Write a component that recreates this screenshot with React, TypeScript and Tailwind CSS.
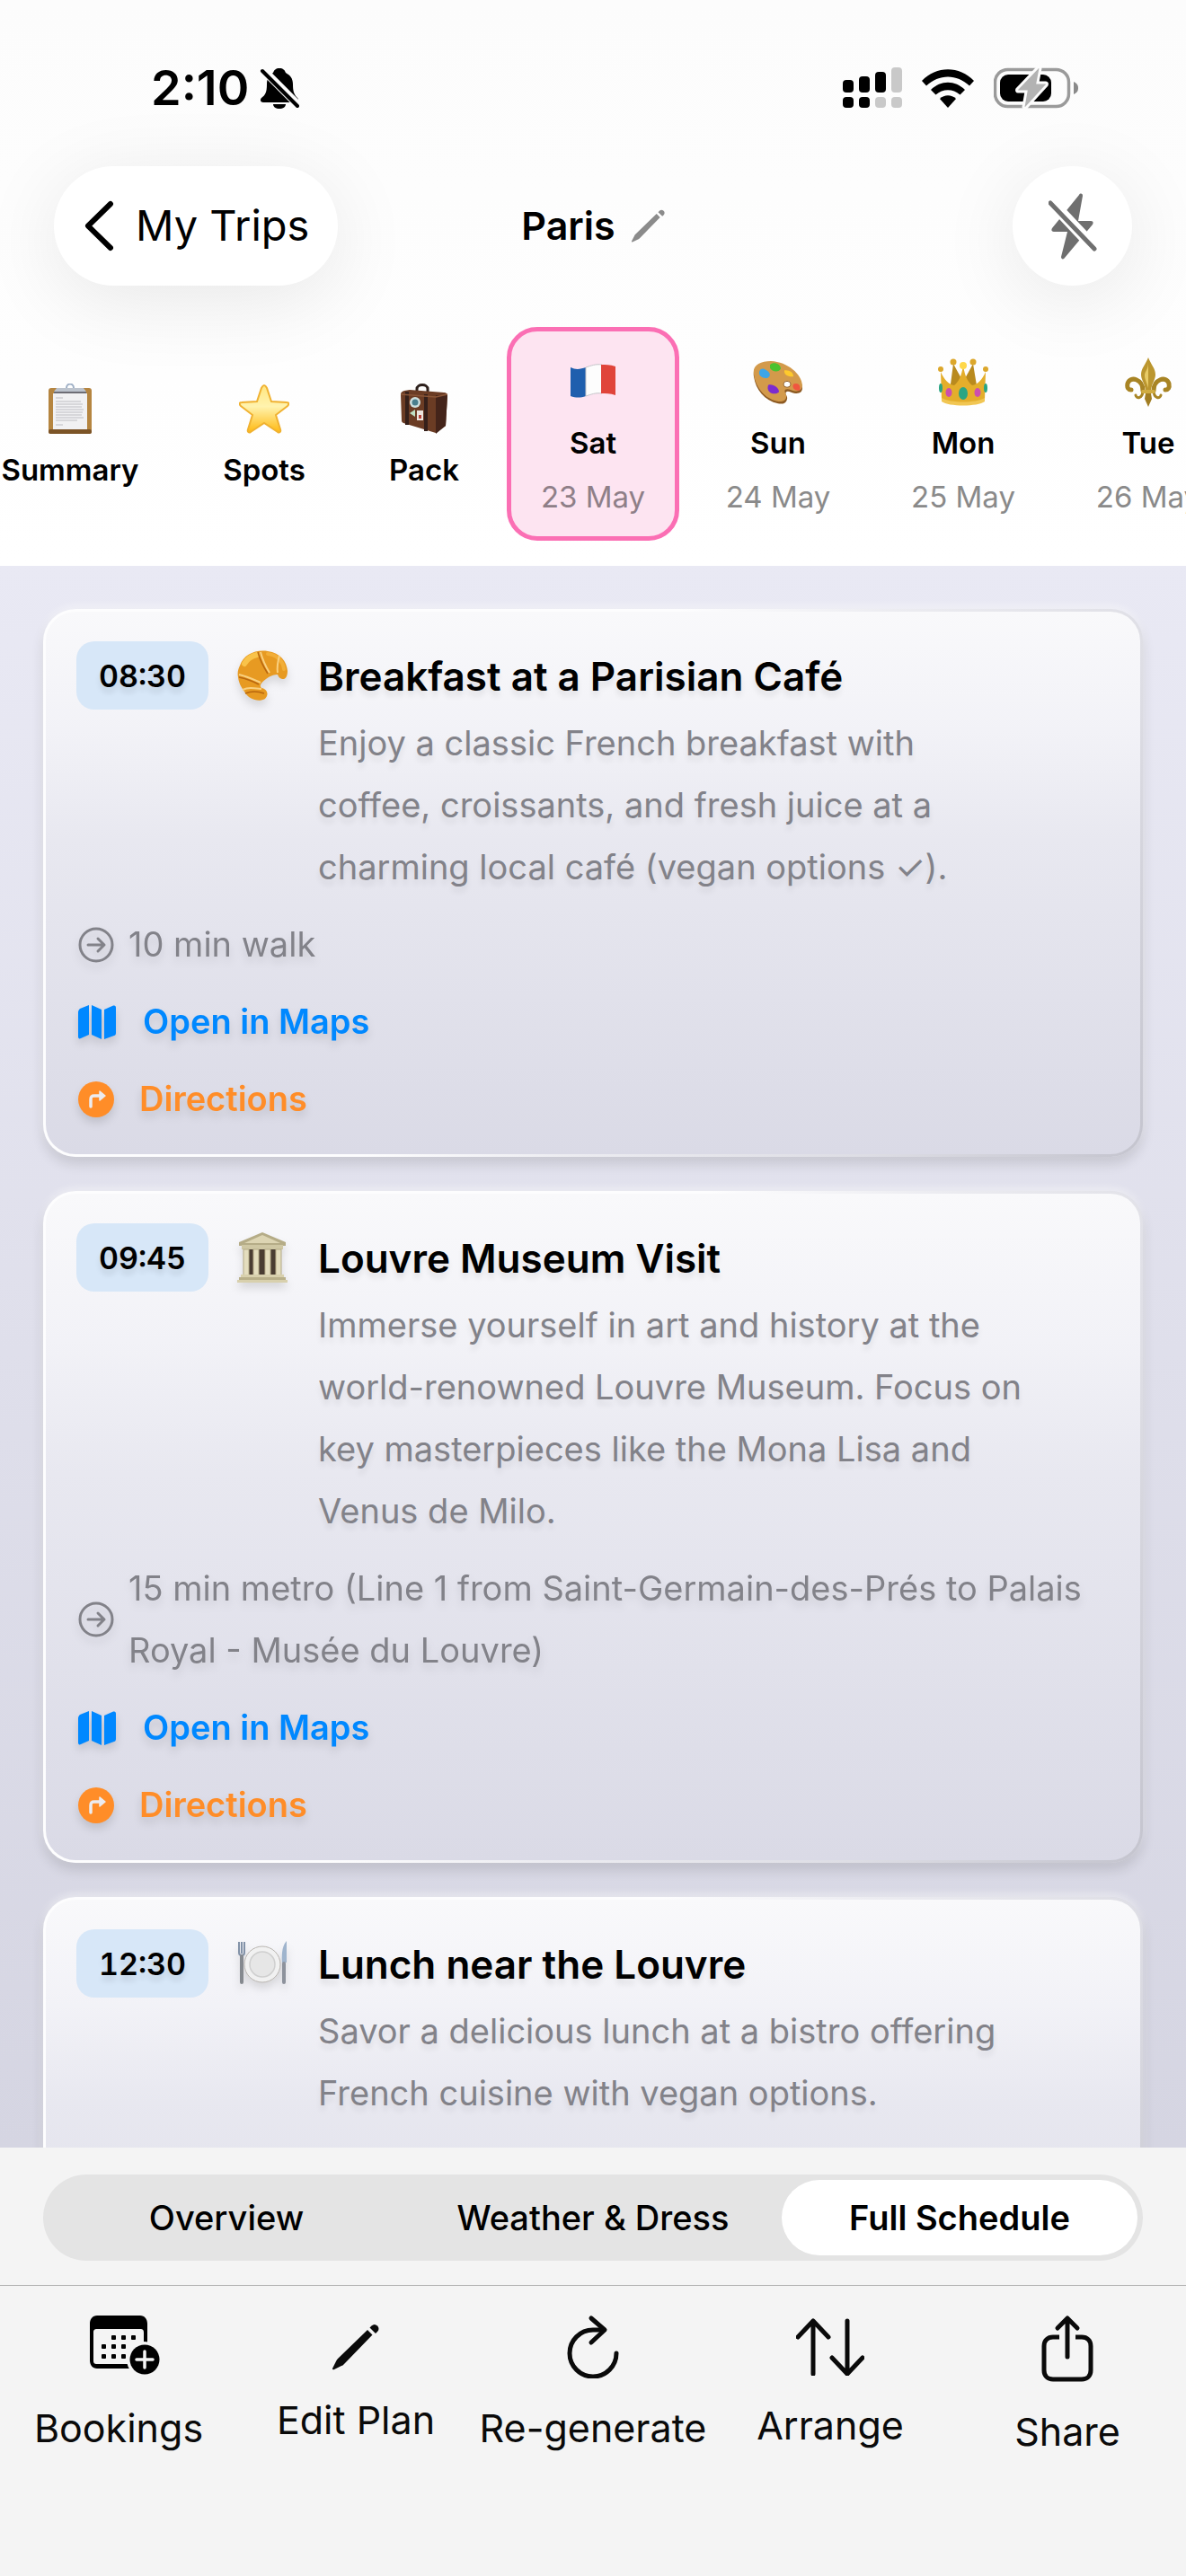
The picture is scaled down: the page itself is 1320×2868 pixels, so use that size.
import type { ReactNode } from 'react';
import clsx from 'clsx';

/* ---------- Status bar icons ---------- */

function BellOff() {
  return (
    <svg width="44" height="46" viewBox="0 0 44 46" fill="none">
      <path d="M22 1c-4 0-6 2-7 5-5 3-7 7-7 13 0 9-2 12-6 15-2 2-1 5 2 5h36c3 0 4-3 2-5-4-4-5-8-5-15 0-7-3-10-8-13-1-3-3-5-7-5Z" fill="#000" />
      <path d="M15 41h14c0 3-3 5-7 5s-7-2-7-5Z" fill="#000" />
      <path d="M2 1 43 42" stroke="#fcfcfc" strokeWidth="9" />
      <path d="M3 4 42 43" stroke="#000" strokeWidth="4" strokeLinecap="round" />
    </svg>
  );
}

function Signal() {
  return (
    <svg width="66" height="46" viewBox="0 0 66 46">
      <rect x="0" y="14" width="12" height="14" rx="4" />
      <rect x="18" y="10" width="12" height="18" rx="4" />
      <rect x="36" y="5" width="12" height="23" rx="4" />
      <rect x="54" y="0" width="12" height="28" rx="4" fill="#c9c9c9" />
      <rect x="0" y="33" width="12" height="12" rx="4" />
      <rect x="18" y="33" width="12" height="12" rx="4" />
      <rect x="36" y="33" width="12" height="12" rx="4" fill="#c9c9c9" />
      <rect x="54" y="33" width="12" height="12" rx="4" fill="#c9c9c9" />
    </svg>
  );
}

function Wifi() {
  return (
    <svg width="58" height="43" viewBox="0 0 58 43">
      <path d="M0 13C16-4 42-4 58 13l-5 5.500C39 5 19 5 5 18.500Z" />
      <path d="M10 23c11-11 27-11 38 0l-5.500 5.500c-8-7-19-7-27 0Z" />
      <path d="M20 33c5-5 13-5 18 0l-9 10Z" />
    </svg>
  );
}

function Battery() {
  return (
    <svg width="94" height="46" viewBox="0 0 94 46">
      <rect x="1.500" y="2.500" width="82" height="41" rx="14" fill="none" stroke="#9a9a9a" strokeWidth="3.500" />
      <rect x="7" y="8" width="57" height="30" rx="9" />
      <path d="M89 16c4 2 5 4 5 7s-1 5-5 7Z" fill="#8a8a8a" />
      <path
        d="M48 1 26 24c-1 2 0 3 1 3h9l-3 17c1 2 3 2 4 0l22-24c1-2 0-3-1-3h-9l3-16c-1-2-3-2-4 0Z"
        fill="#b3b3b3"
        stroke="#fcfcfc"
        strokeWidth="3"
      />
    </svg>
  );
}

/* ---------- Action icons ---------- */

function Pencil({ size, className }: { size: number; className?: string }) {
  return (
    <svg width={size} height={size} viewBox="0 0 52 52" fill="currentColor" className={className}>
      <path d="M0 50 4 42c.5-1 1-2 2-3L39 7l5.500 5.500L13 45c-1 1-2 2-3 2l-8 4c-1.500.5-2.500 0-2-1Z" />
      <path d="m41.500 4.500 2-2c2-2 4.500-2 6.500 0s2 4.500 0 6.500l-2 2Z" />
    </svg>
  );
}

function BoltOff() {
  return (
    <svg width="54" height="74" viewBox="0 0 54 74" fill="none">
      <path d="M34 2c1-2 4-2 4 1l-5 28h14c3 0 3 2 2 4L18 72c-1 2-4 2-4-1l7-28H6c-3 0-3-2-2-4Z" fill="#6f6f6f" />
      <path d="M2 9 52 62" stroke="#fff" strokeWidth="13" />
      <path d="M2 11 51 62" stroke="#6f6f6f" strokeWidth="5" strokeLinecap="round" />
    </svg>
  );
}

// The plus badge hangs outside the 64px box so the calendar itself stays centred.
function CalendarPlus() {
  return (
    <svg width="64" height="74" viewBox="0 0 64 74" className="overflow-visible">
      <path
        fillRule="evenodd"
        d="M8 4h48c5 0 8 4 8 9v41c0 5-3 9-8 9H8c-5 0-8-4-8-9V13c0-5 3-9 8-9Zm0 15c-3 0-4 1-4 4v31c0 3 1 4 4 4h48c3 0 4-1 4-4V23c0-3-1-4-4-4Z"
      />
      <g>
        <rect x="24" y="26" width="5" height="5" rx="1" />
        <rect x="35" y="26" width="5" height="5" rx="1" />
        <rect x="46" y="26" width="5" height="5" rx="1" />
        <rect x="13" y="36" width="5" height="5" rx="1" />
        <rect x="24" y="36" width="5" height="5" rx="1" />
        <rect x="35" y="36" width="5" height="5" rx="1" />
        <rect x="13" y="47" width="5" height="5" rx="1" />
        <rect x="24" y="47" width="5" height="5" rx="1" />
        <rect x="35" y="47" width="5" height="5" rx="1" />
      </g>
      <circle cx="61" cy="53" r="20" fill="#f4f4f4" />
      <circle cx="61" cy="53" r="16.500" />
      <path d="M61 44v18M52 53h18" stroke="#f4f4f4" strokeWidth="3.500" strokeLinecap="round" />
    </svg>
  );
}

function EditIcon() {
  return (
    <span className="flex h-[65px] items-end">
      <Pencil size={52} />
    </span>
  );
}

function Regenerate() {
  return (
    <svg width="58" height="74" viewBox="0 0 58 74" fill="none" stroke="#0a0a0a" strokeWidth="5" strokeLinecap="round" strokeLinejoin="round">
      <path d="M55 46A26 26 0 1 1 29 20h11" />
      <path d="M27 7 42 20 27 34" />
    </svg>
  );
}

function Arrange() {
  return (
    <svg width="76" height="71" viewBox="0 0 76 71" fill="none" stroke="#0a0a0a" strokeWidth="5" strokeLinecap="round" strokeLinejoin="round">
      <path d="M19 69V10M2 28 19 10l17 18M57 10v59M40 51l17 18 17-18" />
    </svg>
  );
}

function Share() {
  return (
    <svg width="58" height="78" viewBox="0 0 58 78" fill="none" stroke="#0a0a0a" strokeWidth="5" strokeLinecap="round" strokeLinejoin="round">
      <path d="M29 50V7M18 18 29 7l11 11" />
      <path d="M20 28h-7c-6 0-10 4-10 10v27c0 6 4 10 10 10h32c6 0 10-4 10-10V38c0-6-4-10-10-10h-7" strokeLinecap="butt" />
    </svg>
  );
}

/* ---------- Card row icons ---------- */

function ArrowCircle() {
  return (
    <svg width="40" height="40" viewBox="0 0 40 40" fill="none" stroke="#828289" strokeWidth="3" strokeLinecap="round" strokeLinejoin="round" className="shrink-0">
      <circle cx="20" cy="20" r="18" />
      <path d="M11 20h18M22 13l7 7-7 7" />
    </svg>
  );
}

function MapIcon() {
  return (
    <svg width="42" height="40" viewBox="0 0 42 40" fill="#0088ff" className="shrink-0">
      <path d="M0 9c0-2 1-3 2-4l10-4v33L3 38c-2 1-3 0-3-2Z" />
      <path d="m15 1 11 5v33l-11-5Z" />
      <path d="M29 6 38 2c3-1 4 0 4 2v28c0 2-1 3-2 3l-11 4Z" />
    </svg>
  );
}

function TurnCircle() {
  return (
    <svg width="40" height="40" viewBox="0 0 40 40" fill="none" className="shrink-0">
      <circle cx="20" cy="20" r="20" fill="#ff8d28" />
      <path d="M14 28v-8c0-3 1-4 4-4h8" stroke="#ececf0" strokeWidth="3.500" strokeLinecap="round" />
      <path d="m24 11 6 5-6 5Z" fill="#ececf0" stroke="#ececf0" strokeWidth="1.500" strokeLinejoin="round" />
    </svg>
  );
}

/* ---------- Pictograms ---------- */

function Clipboard() {
  return (
    <svg width="56" height="56" viewBox="0 0 56 56">
      <rect x="4" y="5" width="48" height="51" rx="3" fill="#b58540" />
      <rect x="4" y="51" width="48" height="5" rx="2" fill="#7c5427" />
      <path d="M9 11h38v40H9Z" fill="#f1f1f3" />
      <path d="M10 9h36l-3-4H13Z" fill="#bcc3cd" />
      <rect x="10" y="9" width="36" height="2" fill="#6d6d75" />
      <path d="M24 5c0-6 8-6 8 0" fill="none" stroke="#9fb0c6" strokeWidth="2" />
      <path d="M12 16h8M12 20h28M12 23h30M12 26h29M12 29h31M12 32h30M12 35h29M12 38h31M12 41h24M12 46h8" stroke="#bdbdc2" strokeWidth="1" />
    </svg>
  );
}

function Star() {
  return (
    <svg width="56" height="56" viewBox="0 0 56 56">
      <defs>
        <linearGradient id="star" x1="0" y1="0" x2="0" y2="1">
          <stop offset="0" stopColor="#ffe680" />
          <stop offset=".45" stopColor="#fff3ae" />
          <stop offset="1" stopColor="#ffb911" />
        </linearGradient>
      </defs>
      <path
        d="M28 2c1 0 2 1 3 3l5 15 17 1c3 0 3 2 1 4L41 35l5 16c1 3-1 4-3 3L28 44 13 54c-2 1-4 0-3-3l5-16L2 25c-2-2-2-4 1-4l17-1 5-15c1-2 2-3 3-3Z"
        fill="url(#star)"
        stroke="#f0b232"
        strokeWidth="2"
      />
    </svg>
  );
}

function Suitcase() {
  return (
    <svg width="56" height="56" viewBox="0 0 56 56">
      <path d="M20 11V6c0-6 12-6 12 0v6" fill="none" stroke="#2c1f1b" strokeWidth="3" />
      <path d="M2 12c0-2 1-3 4-4l6-1 38 3c3 0 4 2 4 4l-2 33-11 8L5 44c-2-1-2-2-2-3Z" fill="#6b3c24" />
      <path d="m41 13 13 0-2 34-11 9Z" fill="#44241a" />
      <path d="M9 9v37M30 12v41" stroke="#35201a" strokeWidth="4" />
      <path d="M2 12 41 15l13-3" fill="none" stroke="#8a5638" strokeWidth="1.500" />
      <circle cx="18" cy="21" r="6" fill="#cfe0de" />
      <circle cx="18" cy="21" r="3.500" fill="#4a7f8d" />
      <path d="m12 33 6-4v8Z" fill="#bfe0c4" />
      <rect x="20" y="30" width="7" height="11" fill="#ece6df" />
      <path d="M22 35h3v4h-3Z" fill="#b6423a" />
    </svg>
  );
}

function Flag() {
  return (
    <svg width="56" height="56" viewBox="0 0 56 56">
      <path d="M3 12c6 3 11 2 17 0v32c-6 2-11 2-17 0Z" fill="#1f5fae" />
      <path d="M20 12c6-2 11-4 18-3v32c-7-1-12 1-18 3Z" fill="#fdfdfd" stroke="#c5c5c9" strokeWidth="1" />
      <path d="M37 9c5 0 10 0 16 2v32c-6-2-11-2-16-2Z" fill="#e0443a" />
    </svg>
  );
}

function Palette() {
  return (
    <svg width="56" height="56" viewBox="0 0 56 56">
      <g transform="translate(0 5) scale(1 .86)">
        <path d="M1 20C-1 8 8 1 20 2c19 1 34 18 35 33 0 6-4 7-8 7-4-1-8-4-10-2-2 3 2 5 1 9-1 6-5 7-10 6C13 51 3 37 1 20Z" fill="#8d5a22" />
        <path d="M1 17C-1 6 8 0 20 0c19 1 34 17 35 31 0 6-4 8-8 8-4-1-8-4-11-2-2 3 2 6 1 10-1 5-5 6-10 5C13 49 3 34 1 17Z" fill="#d39a4b" />
        <circle cx="38" cy="30" r="4" fill="#fff" stroke="#8d5a22" />
        <path d="M7 14c1-5 5-5 8-2 5 3 5 8 1 10-5 1-10-3-9-8Z" fill="#3da5e8" />
        <path d="M19 5c4-5 12-1 12 5-2 5-10 4-12-1Z" fill="#4cc22e" />
        <path d="M35 12c6-1 10 3 10 8-5 1-11-2-10-8Z" fill="#ffca2c" />
        <path d="M45 30c5-3 9 2 7 8-5 1-9-3-7-8Z" fill="#f0563f" />
        <path d="M17 31c5-2 12 3 12 9-5 5-15 1-12-9Z" fill="#7c2bd0" />
      </g>
    </svg>
  );
}

function Crown() {
  return (
    <svg width="56" height="56" viewBox="0 0 56 56">
      <path d="m13 38 4-30 11 20L39 8l5 30Z" fill="#b98a1e" />
      <path d="M3 17c4 9 9 14 15 15 5-4 8-10 10-22 2 12 5 18 10 22 6-1 11-6 15-15l-1 31c-8 7-40 7-48 0Z" fill="#e4ae2b" />
      <path d="M4 46c10 6 38 6 48 0v4c-8 6-40 6-48 0Z" fill="#f1c653" />
      <g fill="#dca72b">
        <circle cx="3" cy="14" r="3" />
        <circle cx="17" cy="6" r="3.500" />
        <circle cx="28" cy="10" r="4" fill="#ffd84a" />
        <circle cx="39" cy="6" r="3.500" />
        <circle cx="53" cy="14" r="3" />
      </g>
      <ellipse cx="28" cy="41" rx="5" ry="7" fill="#2aa583" />
      <ellipse cx="12" cy="40" rx="3.500" ry="5" fill="#cc4fae" />
      <ellipse cx="44" cy="40" rx="3.500" ry="5" fill="#cc4fae" />
      <ellipse cx="3" cy="35" rx="2" ry="5" fill="#2aa583" />
      <ellipse cx="53" cy="35" rx="2" ry="5" fill="#2aa583" />
    </svg>
  );
}

function FleurDeLis() {
  return (
    <svg width="56" height="56" viewBox="0 0 56 56">
      <g fill="none" stroke="#a88424" strokeWidth="5" strokeLinecap="round">
        <path d="M22 38c0-13-14-17-17-8-1 5 1 7 4 7" />
        <path d="M34 38c0-13 14-17 17-8 1 5-1 7-4 7" />
        <path d="M22 38c0 8-7 10-8 5M34 38c0 8 7 10 8 5" strokeWidth="3" />
      </g>
      <path d="M28 1c3 8 8 12 8 19 0 6-4 9-5 18h-6c-1-9-5-12-5-18 0-7 5-11 8-19Z" fill="#bb962f" />
      <path d="M28 6c0 9-4 10-4 15 0 5 3 9 4 14Z" fill="#e8cb66" />
      <rect x="20" y="37" width="16" height="4" rx="2" fill="#d0ac42" />
      <path d="M25 41h6l1 6-4 9-4-9Z" fill="#a17d22" />
    </svg>
  );
}

function Croissant() {
  return (
    <svg width="56" height="56" viewBox="0 0 56 56">
      <path
        d="M31 54c-7 4-18 1-23-8C4 40 2 37 1 30c-1-5 0-9 2-13C7 5 20-1 34 1c14 2 21 11 22 22 0 4-1 8-4 9-4 0-6-2-7-5-3 0-8 1-13 5-5 4-8 7-5 10 6 1 9 7 4 12Z"
        fill="#e79a22"
      />
      <path d="M34 4c10 1 17 8 18 17" fill="none" stroke="#f2ae38" strokeWidth="4" strokeLinecap="round" />
      <path d="M8 15C12 8 17 6 22 5" fill="none" stroke="#f9c34a" strokeWidth="6" strokeLinecap="round" />
      <path d="M26 2c2 8 5 15 10 23M2 27c9 2 15 5 24 9M47 6c-2 7-3 12-2 19M6 44c7-3 12-2 21-1" fill="none" stroke="#f9d080" strokeWidth="2" />
      <path d="M23 2c2 8 6 16 11 24M2 30c9 2 15 4 22 8M9 48c7-3 13-3 21 0" fill="none" stroke="#b8660f" strokeWidth="1.500" />
    </svg>
  );
}

function Museum() {
  return (
    <svg width="56" height="56" viewBox="0 0 56 56">
      <path d="M28 0 2 11v4h52v-4Z" fill="#b5ac87" />
      <path d="M28 3 8 12h40Z" fill="#ddd5b3" />
      <rect x="5" y="14" width="46" height="5" fill="#cfc7a3" />
      <rect x="8" y="19" width="40" height="29" fill="#4a3d32" />
      <g fill="#e4ddbe" stroke="#b5ac87" strokeWidth="1">
        <rect x="7" y="19" width="6" height="29" />
        <rect x="18" y="19" width="6" height="29" />
        <rect x="31" y="19" width="6" height="29" />
        <rect x="43" y="19" width="6" height="29" />
      </g>
      <rect x="4" y="47" width="48" height="3" fill="#d8d0ad" />
      <rect x="2" y="50" width="52" height="3" fill="#b9b08a" />
      <rect x="0" y="53" width="56" height="3" fill="#d8d0ad" />
    </svg>
  );
}

function Plate() {
  return (
    <svg width="56" height="56" viewBox="0 0 56 56">
      <circle cx="28" cy="29" r="20" fill="#f1f1f1" stroke="#b9b5b0" strokeWidth="1" />
      <circle cx="28" cy="29" r="14" fill="#e6e6e6" stroke="#cfcfcf" strokeWidth="1.500" />
      <path d="M2 4v12c0 4 6 4 6 0V4M5 4v13" fill="none" stroke="#8292a8" strokeWidth="2" />
      <path d="M5 20v29" stroke="#85898f" strokeWidth="4" strokeLinecap="round" />
      <path d="M55 3c-4 4-6 12-5 24h5Z" fill="#9fb4cd" />
      <path d="M52 28v21" stroke="#8d929c" strokeWidth="4" strokeLinecap="round" />
    </svg>
  );
}

/* ---------- Data ---------- */

type Tab = { label: string; date?: string; icon: ReactNode; width: string; active?: boolean };

const TABS: Tab[] = [
  { label: 'Summary', icon: <Clipboard />, width: 'w-[232px]' },
  { label: 'Spots', icon: <Star />, width: 'w-[172px]' },
  { label: 'Pack', icon: <Suitcase />, width: 'w-[156px]' },
  { label: 'Sat', date: '23 May', icon: <Flag />, width: 'w-48', active: true },
  { label: 'Sun', date: '24 May', icon: <Palette />, width: 'w-48' },
  { label: 'Mon', date: '25 May', icon: <Crown />, width: 'w-48' },
  { label: 'Tue', date: '26 May', icon: <FleurDeLis />, width: 'w-48' },
];

type Stop = { time: string; icon: ReactNode; title: string; text: string; travel?: string };

const STOPS: Stop[] = [
  {
    time: '08:30',
    icon: <Croissant />,
    title: 'Breakfast at a Parisian Café',
    text: 'Enjoy a classic French breakfast with coffee, croissants, and fresh juice at a charming local café (vegan options ✓).',
    travel: '10 min walk',
  },
  {
    time: '09:45',
    icon: <Museum />,
    title: 'Louvre Museum Visit',
    text: 'Immerse yourself in art and history at the world-renowned Louvre Museum. Focus on key masterpieces like the Mona Lisa and Venus de Milo.',
    travel: '15 min metro (Line 1 from Saint-Germain-des-Prés to Palais Royal - Musée du Louvre)',
  },
  {
    time: '12:30',
    icon: <Plate />,
    title: 'Lunch near the Louvre',
    text: 'Savor a delicious lunch at a bistro offering French cuisine with vegan options.',
  },
];

const VIEWS = ['Overview', 'Weather & Dress', 'Full Schedule'];

const ACTIONS = [
  { label: 'Bookings', icon: <CalendarPlus /> },
  { label: 'Edit Plan', icon: <EditIcon /> },
  { label: 'Re-generate', icon: <Regenerate /> },
  { label: 'Arrange', icon: <Arrange /> },
  { label: 'Share', icon: <Share /> },
];

/* ---------- Sections ---------- */

function StatusBar() {
  return (
    <div className="flex h-[185px] items-start justify-between pt-[70px] pr-[120px] pl-[168px]">
      <div className="flex h-14 items-center gap-3">
        <span className="text-[54px] leading-[56px] font-semibold">2:10</span>
        <BellOff />
      </div>
      <div className="flex h-14 items-center gap-[22px]">
        <Signal />
        <Wifi />
        <Battery />
      </div>
    </div>
  );
}

function TopNav() {
  return (
    <div className="grid grid-cols-[1fr_auto_1fr] items-center px-[60px]">
      <button className="flex h-[133px] items-center gap-6 justify-self-start rounded-full bg-white pr-8 pl-[34px] text-[47px] shadow-[0_16px_90px_rgba(0,0,0,0.09)]">
        <svg width="33" height="57" viewBox="0 0 33 57" fill="none" stroke="#000" strokeWidth="6" strokeLinecap="round" strokeLinejoin="round">
          <path d="M29 4 4 28.500 29 53" />
        </svg>
        My Trips
      </button>
      <h1 className="flex items-center gap-[18px] text-[43px] font-semibold">
        Paris
        <Pencil size={37} className="text-[#8b8b8b]" />
      </h1>
      <button
        aria-label="Flash off"
        className="flex h-[133px] w-[133px] items-center justify-center justify-self-end rounded-full bg-white shadow-[0_16px_90px_rgba(0,0,0,0.09)]"
      >
        <BoltOff />
      </button>
    </div>
  );
}

function DayTabs() {
  return (
    <nav className="mt-[46px] overflow-hidden pb-7">
      <div className="-ml-[38px] flex gap-[14px]">
        {TABS.map((tab) => (
          <button
            key={tab.label}
            className={clsx(
              'flex h-[238px] shrink-0 flex-col items-center justify-center gap-5 rounded-[34px] border-[5px] pt-1 text-[33px] leading-10',
              tab.width,
              tab.active ? 'border-[#fb6fb4] bg-[#fde4f1]' : 'border-transparent',
            )}
          >
            {tab.icon}
            <span className="font-semibold">{tab.label}</span>
            {tab.date && <span className={tab.active ? 'text-[#8f7f88]' : 'text-[#8a8a8a]'}>{tab.date}</span>}
          </button>
        ))}
      </div>
    </nav>
  );
}

function StopCard({ stop }: { stop: Stop }) {
  return (
    <article className="flex min-h-[540px] shrink-0 flex-col gap-[17px] rounded-[36px] border-[3px] border-transparent px-[34px] pt-8 pb-[27px] text-[38px] leading-[69px] text-[#828289] shadow-[0_8px_14px_rgba(0,0,0,0.12),0_-3px_8px_rgba(255,255,255,0.5)] [background:linear-gradient(#f9f9fb,#f2f2f7_22%,#e8e8f0_42%,#dadae6)_padding-box,linear-gradient(120deg,#fdfdfe_45%,#ececf1_60%,#dedee5_80%,#c4c4ce)_border-box]">
      <div className="flex items-start">
        <time className="mt-px flex h-[76px] w-[147px] shrink-0 items-center justify-center rounded-[20px] bg-[#d7e7f8] text-[34px] font-semibold text-black tabular-nums text-shadow-[0_6px_6px_rgb(0_0_0/0.1)]">
          {stop.time}
        </time>
        <span className="mx-8 mt-[11px] shrink-0 drop-shadow-[0_6px_5px_rgba(0,0,0,0.12)]">{stop.icon}</span>
        <div className="max-w-[794px] flex-1 pl-[2px] text-shadow-[0_6px_6px_rgb(0_0_0/0.08)]">
          <h2 className="text-[44px] leading-[80px] font-semibold text-black">{stop.title}</h2>
          <p>{stop.text}</p>
        </div>
      </div>
      {stop.travel && (
        <>
          <div className="flex items-center gap-4 pl-[2px] drop-shadow-[0_6px_5px_rgba(0,0,0,0.10)]">
            <ArrowCircle />
            <p>{stop.travel}</p>
          </div>
          <a href="#maps" className="flex items-center gap-[30px] self-start pl-[2px] font-semibold text-[#0088ff] drop-shadow-[0_6px_5px_rgba(0,0,0,0.12)]">
            <MapIcon />
            Open in Maps
          </a>
          <a href="#directions" className="flex items-center gap-7 self-start pl-[2px] font-semibold text-[#ff8d28] drop-shadow-[0_6px_5px_rgba(0,0,0,0.12)]">
            <TurnCircle />
            Directions
          </a>
        </>
      )}
    </article>
  );
}

function ViewSwitch() {
  return (
    <div className="px-12 pt-[30px] pb-[27px]">
      <div className="flex h-24 gap-3 rounded-full bg-[#e4e4e4] p-[6px]">
        {VIEWS.map((view) => (
          <button
            key={view}
            className={clsx(
              'flex-1 rounded-full text-[38px]',
              view === 'Full Schedule' ? 'bg-white font-semibold' : 'font-medium',
            )}
          >
            {view}
          </button>
        ))}
      </div>
    </div>
  );
}

function Toolbar() {
  return (
    <div className="flex items-start border-t border-[#b2b2b2] pt-[29px] pb-[134px]">
      {ACTIONS.map((action) => (
        <button key={action.label} className="flex flex-1 basis-0 flex-col items-center gap-7 text-[43px] leading-[54px] whitespace-nowrap text-[#0a0a0a]">
          {action.icon}
          {action.label}
        </button>
      ))}
    </div>
  );
}

export default function App() {
  return (
    <div className="flex h-screen flex-col overflow-hidden font-[Inter,'Liberation_Sans',sans-serif] text-black">
      <header className="bg-linear-to-b from-[#fcfcfc] to-white">
        <StatusBar />
        <TopNav />
        <DayTabs />
      </header>

      <main className="flex min-h-0 flex-1 flex-col gap-[38px] overflow-hidden bg-linear-to-b from-[#e9e9f4] to-[#d5d5e2] px-12 pt-[48px]">
        {STOPS.map((stop) => (
          <StopCard key={stop.time} stop={stop} />
        ))}
      </main>

      <footer className="bg-[#f4f4f4]">
        <ViewSwitch />
        <Toolbar />
      </footer>
    </div>
  );
}
